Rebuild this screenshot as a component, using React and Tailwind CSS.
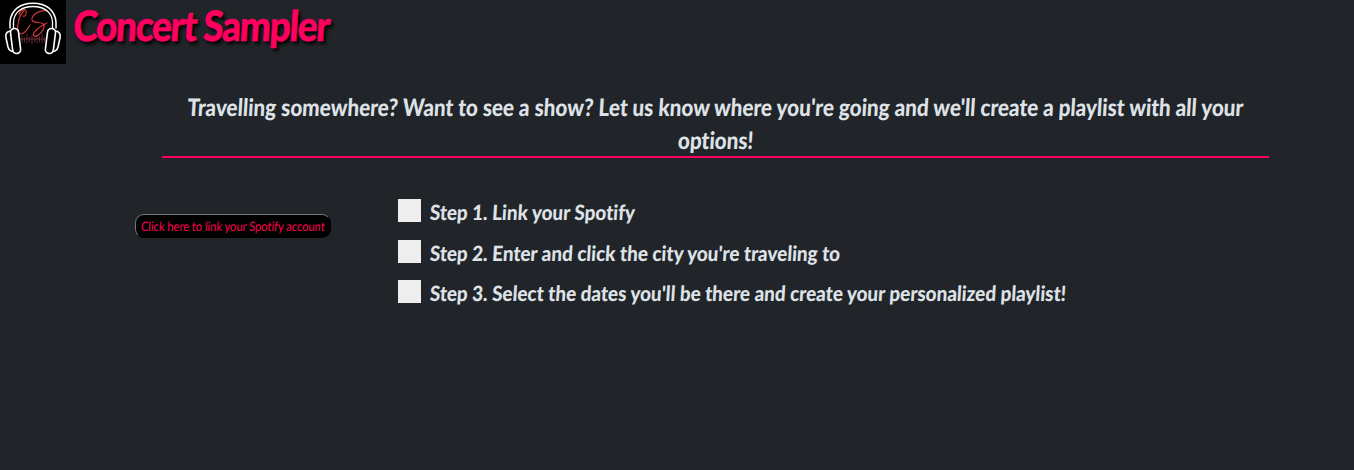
import React from "react";

function Logo() {
  return (
    <svg viewBox="0 0 66 64" className="h-16 w-[66px] shrink-0 bg-black" fill="none" strokeLinecap="round" strokeLinejoin="round">
      <g stroke="#a04a55" strokeWidth="0.8" opacity="0.75">
        <path d="M20 39H48" />
        <path d="M22 36v6M24.5 38v4M27 34v9M29.5 37v5M32 35v9M34.5 38v4M37 35v8M39.5 37v5M42 34v9M44.5 37v5" />
      </g>
      <path
        d="M19 15C20 10 25 8 26 11C27 14 25 17 23 16M24 11C19 15 17 25 18 31C19 37 26 33 30 25M47 11C39 9 31 16 32 20C33 24 43 21 44 25C45 30 37 38 34 36C31 34 38 27 47 23"
        stroke="#d83a3a"
        strokeWidth="1.1"
      />
      <path d="M10 28V22C11 10 20 3.300 33 3.300S55 10 56 22V28" stroke="#fff" strokeWidth="1.500" />
      <path d="M13.500 28V22C14 12 22 6.500 33 6.500S52 12 52.500 22V28" stroke="#fff" strokeWidth="1.300" />
      <g stroke="#fff" strokeWidth="1.600" fill="#000">
        <path d="M11 31C7 31 5 34 6 38L8 47C9 51 12 52 15 51Z" />
        <path d="M55 31C59 31 61 34 60 38L58 47C57 51 54 52 51 51Z" />
        <rect x="11.500" y="28.500" width="8" height="25" rx="3.800" transform="rotate(-7 15.500 40.500)" />
        <rect x="46.500" y="28.500" width="8" height="25" rx="3.800" transform="rotate(7 50.500 40.500)" />
      </g>
    </svg>
  );
}

function Step({ children }) {
  return (
    <li className="flex h-[40.5px] items-start">
      <span className="h-[23px] w-[23px] shrink-0 bg-[#eeeeee]" />
      <span className="ml-[9px] origin-left -skew-x-4 scale-x-[0.898] whitespace-nowrap text-[21px] leading-[25px]">{children}</span>
    </li>
  );
}

export default function App() {
  return (
    <div className="h-[470px] overflow-hidden bg-[#212529] font-['Lato',sans-serif] text-[#dee2e6] [font-variant-ligatures:none]">
      <header className="flex h-16 items-start">
        <Logo />
        <h1 className="ml-[6px] origin-bottom-left -skew-x-4 scale-x-[0.882] whitespace-nowrap text-[42px] font-black leading-[50px] tracking-[-1.5px] text-[#ff0060] [-webkit-text-stroke:0.5px_#ff0060] [text-shadow:3px_3px_4px_#000]">
          Concert Sampler
        </h1>
      </header>
      <main>
        <h2 className="ml-[162px] mt-[26px] flex h-[68px] w-[1107px] flex-col items-center border-b-2 border-[#ff0060] text-2xl font-black leading-[33px]">
          <span className="-skew-x-4 scale-x-[0.862] whitespace-nowrap">
            Travelling somewhere? Want to see a show? Let us know where you're going and we'll create a playlist with all your
          </span>
          <span className="-skew-x-4 scale-x-[0.862]">options!</span>
        </h2>
        <section className="mt-[41px] flex pl-[135px] font-black">
          <button className="mt-[15px] flex h-6 w-[196px] items-center justify-center rounded-[9px] border border-b-black border-l-[#777] border-r-black border-t-[#777] bg-black text-[13px] font-normal text-[#ff0050]">
            <span className="-skew-x-4 scale-x-[0.852] whitespace-nowrap pt-px">Click here to link your Spotify account</span>
          </button>
          <ul className="ml-[67px]">
            <Step>Step 1. Link your Spotify</Step>
            <Step>Step 2. Enter and click the city you're traveling to</Step>
            <Step>Step 3. Select the dates you'll be there and create your personalized playlist!</Step>
          </ul>
        </section>
      </main>
    </div>
  );
}
